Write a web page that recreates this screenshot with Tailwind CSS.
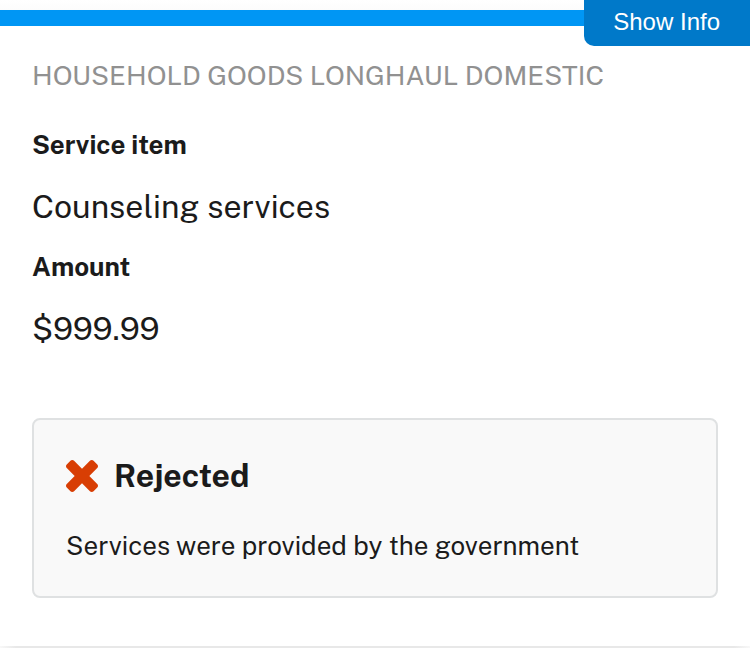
<!DOCTYPE html>
<html lang="en">
<head>
<meta charset="utf-8">
<meta name="viewport" content="width=device-width, initial-scale=1">
<title>Service item review</title>
<script src="https://cdn.jsdelivr.net/npm/@tailwindcss/browser@4"></script>
</head>
<body class="bg-white font-['Public_Sans','Inter',sans-serif] text-[#1b1b1b]">
<button type="button" class="absolute top-0 right-0 h-[46px] rounded-bl-[10px] bg-[#0079c9] pr-[30px] pb-[2px] pl-[29px] font-['Liberation_Sans',Arial,sans-serif] text-2xl text-white">Show Info</button>
<main>
<div class="h-[10px] bg-linear-to-b from-white to-[#fcfcfc]"></div>
<section class="border-t-16 border-[#0096f4] px-8 pt-8 pb-12">
<h1 class="text-[27px] leading-[34px] text-[#919191]">HOUSEHOLD GOODS LONGHAUL DOMESTIC</h1>
<dl class="pt-9">
<dt class="text-[26px] leading-[34px] font-bold">Service item</dt>
<dd class="pt-6 text-[32px] leading-[42px]">Counseling services</dd>
<dt class="pt-[22px] text-[26px] leading-[34px] font-bold">Amount</dt>
<dd class="pt-6 text-[32px] leading-[42px]">$999.99</dd>
</dl>
<div class="mt-17 rounded-lg border-2 border-[#dfe1e2] bg-[#f9f9f9] p-8">
<h2 class="flex items-center gap-4 text-[32px] leading-[48px] font-bold">
<svg class="size-8" viewBox="302 366 1188 1188" fill="#d83e04" aria-hidden="true"><path d="M1490 1322q0 40-28 68l-136 136q-28 28-68 28t-68-28l-294-294-294 294q-28 28-68 28t-68-28l-136-136q-28-28-28-68t28-68l294-294-294-294q-28-28-28-68t28-68l136-136q28-28 68-28t68 28l294 294 294-294q28-28 68-28t68 28l136 136q28 28 28 68t-28 68l-294 294 294 294q28 28 28 68z"/></svg>
Rejected</h2>
<p class="mt-7 text-[26px] leading-[36px]">Services were provided by the government</p>
</div>
</section>
<div class="h-[2px] bg-[linear-gradient(to_right,#f8f8f8,#e8e8e8_16px,#e8e8e8_calc(100%-16px),#f8f8f8)]"></div>
</main>
</body>
</html>
